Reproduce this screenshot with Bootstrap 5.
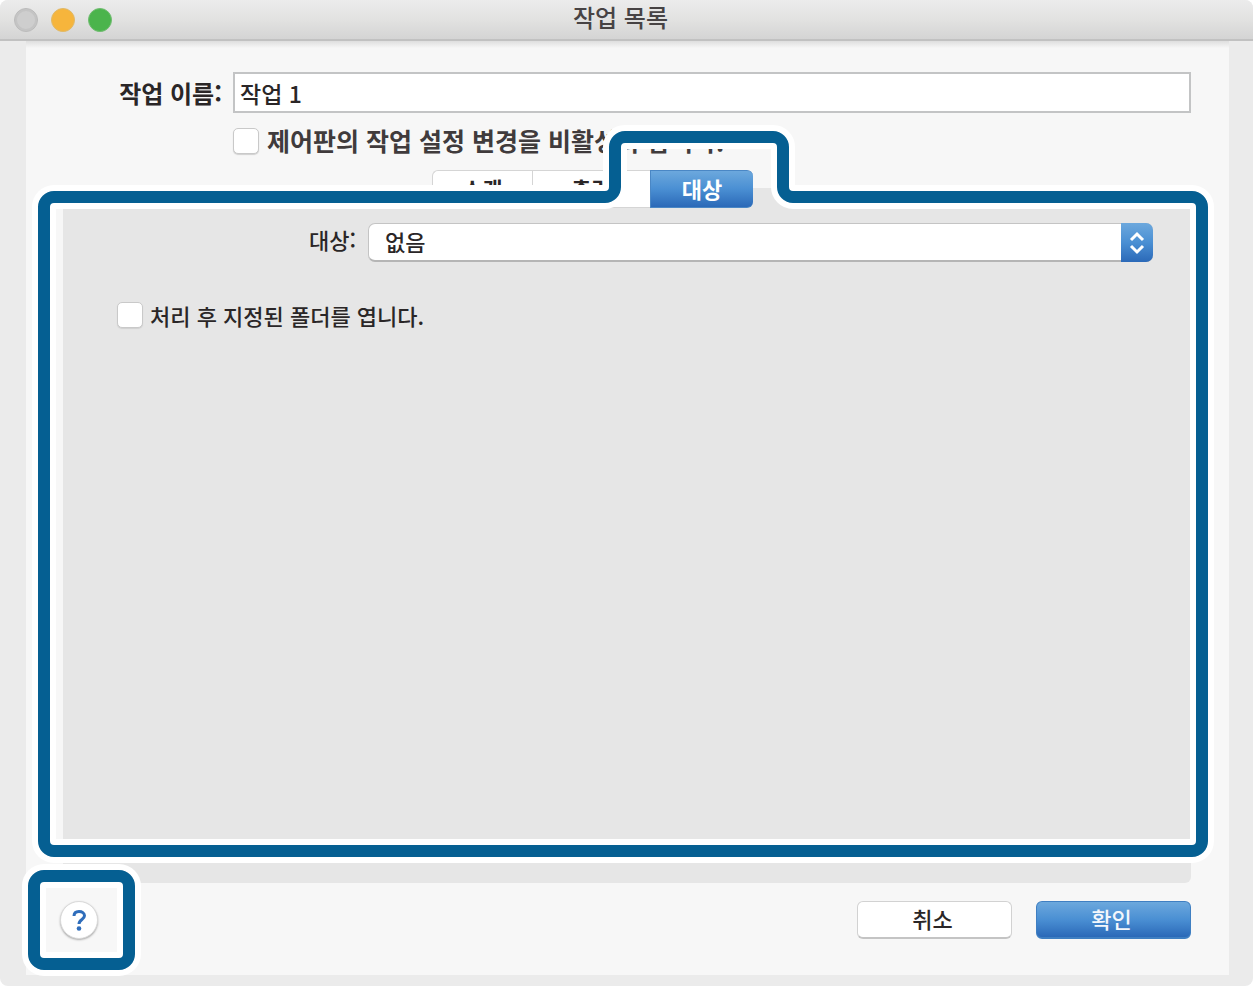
<!DOCTYPE html>
<html lang="ko">
<head>
<meta charset="utf-8">
<meta name="viewport" content="width=device-width, initial-scale=1">
<title>작업 목록</title>
<link href="https://cdn.jsdelivr.net/npm/bootstrap@5.3.0/dist/css/bootstrap.min.css" rel="stylesheet">
<style>
  :root { --accent: #055f92; --panel: #e6e6e6; --sheet: #f7f7f7; }
  body { background: #fff; color: #2a2627; font: 500 22px/32px "Noto Sans CJK KR", sans-serif; }
  .win { background: #ebebeb; border-radius: 8px; padding-bottom: 11px; }
  .titlebar { height: 41px; background: linear-gradient(#ececec, #e2e2e1 50%, #d4d4d4); border-bottom: 2px solid #c1c1c1; border-radius: 8px 8px 0 0; }
  .titlebar h1 { font-size: 24px; line-height: 34px; font-weight: 500; color: #474344; padding-right: 12px; }
  .lights { left: 14px; top: 8px; gap: 13px; }
  .lights button { width: 24px; height: 24px; border-radius: 50%; border: 1px solid; padding: 0; }
  .light-close { background: #cecece; border-color: #bbb !important; box-shadow: inset 0 0 0 2px #c4c4c4; }
  .light-min { background: #f6b53c; border-color: #e0b968 !important; }
  .light-zoom { background: #4bb44c; border-color: #71bd71 !important; }
  .sheet { margin: 0 24px 0 26px; padding: 31px 38px 36px 37px; background: linear-gradient(#dedede, var(--sheet) 7px); }
  .name-label { width: 159px; margin-right: 11px; font-size: 24px; font-weight: 700; }
  .name-field { height: 41px; border: 2px solid #c3c4c5; border-radius: 0; padding: 0 5px; font-size: 23px; font-weight: 500; color: #2a2627; background: #fff; }
  .lock-row { margin: 13px 0 0 170px; height: 30px; }
  .lock-row label { font-size: 25px; line-height: 30px; padding-bottom: 2px; font-weight: 700; color: #403b3c; }
  .box { appearance: none; width: 26px; height: 26px; margin: 0; flex: none; background: #fff; border: 1px solid #c9c9c9; border-radius: 5px; box-shadow: 0 1px 1px #d0d0d0; }
  .box:checked { background: #3f86cc; }
  .tabs { margin: 14px 0 -20px calc(50% - 195px); z-index: 2; height: 38px; }
  .tabs button { border: 1px solid #d5d5d5; border-width: 1px 0 1px 1px; background: #fff; color: #2a2627; font-size: 22px; font-weight: 700; line-height: 32px; padding: 0 0 3px; }
  .tabs .t1 { width: 100px; border-radius: 6px 0 0 6px; }
  .tabs .t2 { width: 118px; }
  .tabs .t3 { width: 103px; border-radius: 0 6px 6px 0; }
  .tabs .t3, .push.ok, .stepper { background: linear-gradient(#6ca8dd, #4a8fd3 50%, #2b69b8); }
  .tabs .t3 { color: #fff; border-color: #4a87c5; }
  .group { background: var(--panel); border-radius: 6px; padding: 35px 38px 0 54px; }
  .dest-label { width: 239px; margin-right: 12px; line-height: 32px; }
  .dest { display: block; appearance: none; width: 100%; height: 39px; background: #fff; border: 1px solid #c4c4c4; border-bottom: 2px solid #b5b5b5; border-radius: 7px; padding: 0 48px 3px 16px; font-size: 22px; font-weight: 500; line-height: 32px; color: #2a2627; }
  .stepper { top: 0; right: 0; bottom: 0; width: 32px; border-radius: 0 7px 7px 0; pointer-events: none; }
  .open-row { margin-top: 37px; gap: 7px; }
  .callout { position: absolute; inset: 3px -17px 26px -25px; z-index: 3; pointer-events: none; }
  .ring { border: 12px solid var(--accent); border-radius: 16px; box-shadow: 0 0 0 6px #fff, inset 0 0 0 6px #fff; }
  .callout .ring { height: 100%;
    clip-path: polygon(-6px -6px, calc(50% - 38px) -6px, calc(50% - 38px) 18px, calc(50% + 193px) 18px, calc(50% + 193px) -6px, calc(100% + 6px) -6px, calc(100% + 6px) calc(100% + 6px), -6px calc(100% + 6px)); }
  .callout svg { position: absolute; left: calc(50% - 38px); top: -66px; }
  .foot { margin-top: 18px; gap: 24px; }
  .help { width: 38px; height: 38px; border-radius: 50%; border: 1px solid #dadada; background: #fff; box-shadow: 0 1px 2px #aaa; margin-left: -3px; padding: 0; }
  .help-ring { position: absolute; inset: -31px -37px -31px -35px; pointer-events: none; z-index: 4; }
  .push { width: 155px; height: 38px; border: 1px solid #d2d2d2; border-bottom: 2px solid #c4c4c4; border-radius: 6px; padding: 0 4px 4px 0; font-size: 22px; font-weight: 500; line-height: 30px; background: #fff; color: #2a2627; }
  .push.ok { color: #f3f7fc; border-color: #3f7fc2; }
</style>
</head>
<body>
<div class="win min-vh-100 d-flex flex-column">
  <header class="titlebar position-relative text-center">
    <div class="lights position-absolute d-flex">
      <button type="button" class="light-close" aria-label="닫기"></button>
      <button type="button" class="light-min" aria-label="최소화"></button>
      <button type="button" class="light-zoom" aria-label="확대"></button>
    </div>
    <h1 class="m-0">작업 목록</h1>
  </header>
  <form class="sheet flex-grow-1 d-flex flex-column">
    <div class="d-flex align-items-center">
      <label class="name-label text-end text-nowrap flex-shrink-0" for="jobName">작업 이름:</label>
      <input class="name-field form-control" id="jobName" type="text" value="작업 1">
    </div>
    <div class="lock-row d-flex align-items-center gap-2">
      <input class="box" type="checkbox" id="lock">
      <label class="text-nowrap" for="lock">제어판의 작업 설정 변경을 비활성화 합니다.</label>
    </div>
    <div class="tabs d-flex position-relative" role="tablist">
      <button type="button" class="t1" role="tab">스캔</button>
      <button type="button" class="t2" role="tab">출력</button>
      <button type="button" class="t3" role="tab" aria-selected="true">대상</button>
    </div>
    <section class="group position-relative flex-grow-1">
      <div class="d-flex">
        <label class="dest-label text-end flex-shrink-0" for="dest">대상:</label>
        <div class="position-relative flex-grow-1">
          <select class="dest" id="dest"><option>없음</option></select>
          <span class="stepper position-absolute d-flex align-items-center justify-content-center">
            <svg width="16" height="24" viewBox="0 0 16 24" fill="none" stroke="#fff" stroke-width="3"><path d="M2 9 8 3l6 6M2 15l6 6 6-6"/></svg>
          </span>
        </div>
      </div>
      <div class="open-row d-flex align-items-center">
        <input class="box" type="checkbox" id="openAfter">
        <label for="openAfter">처리 후 지정된 폴더를 엽니다.</label>
      </div>
      <div class="callout">
        <div class="ring"></div>
        <svg width="231" height="84" viewBox="0 0 231 84" fill="none">
          <path d="M0 72H20a10 10 0 0 0 10-10V22a10 10 0 0 1 10-10H188a10 10 0 0 1 10 10V62a10 10 0 0 0 10 10H231" stroke="#fff" stroke-width="24"/>
          <path d="M0 72H20a10 10 0 0 0 10-10V22a10 10 0 0 1 10-10H188a10 10 0 0 1 10 10V62a10 10 0 0 0 10 10H231" stroke="#055f92" stroke-width="12"/>
        </svg>
      </div>
    </section>
    <footer class="foot d-flex align-items-center">
      <div class="position-relative me-auto">
        <button type="button" class="help d-flex align-items-center justify-content-center" aria-label="도움말">
          <svg width="16" height="24" viewBox="0 0 16 24" fill="none" stroke="#2f6dbb" stroke-width="3"><path d="M3 8C3 5 5 3.500 8 3.500S13.500 5 13.500 7.800C13.500 11.500 8 11.500 8 16"/><circle cx="8" cy="20.500" r="2.300" fill="#2f6dbb" stroke="none"/></svg>
        </button>
        <div class="help-ring ring"></div>
      </div>
      <button type="button" class="push">취소</button>
      <button type="submit" class="push ok">확인</button>
    </footer>
  </form>
</div>
<script src="https://cdn.jsdelivr.net/npm/bootstrap@5.3.0/dist/js/bootstrap.bundle.min.js"></script>
</body>
</html>
